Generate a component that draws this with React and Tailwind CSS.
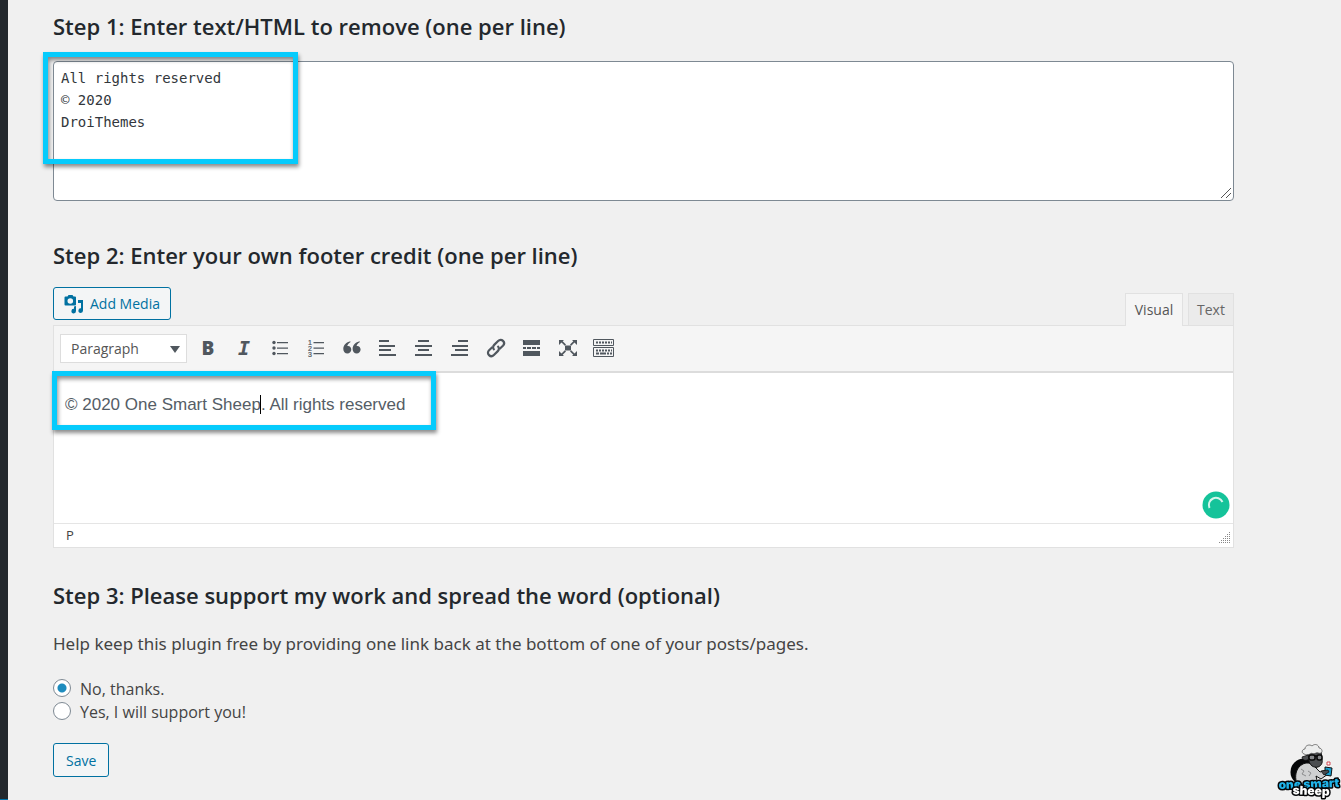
// src/App.jsx
import { useState } from 'react';

const Icon = ({ children }) => (
  <svg viewBox="0 0 20 20" className="w-5 h-5" fill="currentColor" aria-hidden="true">
    {children}
  </svg>
);

const tools = [
  { name: 'Bold', glyph: <span className="text-[19px] leading-5 font-extrabold">B</span> },
  {
    name: 'Italic',
    glyph: <span className="font-['DejaVu_Sans_Mono',monospace] text-[20px] leading-5 font-bold italic">I</span>,
  },
  {
    name: 'Bulleted list',
    glyph: (
      <Icon>
        <circle cx="4" cy="4.500" r="1.700" />
        <circle cx="4" cy="10" r="1.700" />
        <circle cx="4" cy="15.500" r="1.700" />
        <path d="M7 4h11v1.200H7zM7 9.500h11v1.200H7zM7 15h11v1.200H7z" />
      </Icon>
    ),
  },
  {
    name: 'Numbered list',
    glyph: (
      <Icon>
        <g fontSize="7" fontFamily="Liberation Sans, sans-serif" stroke="currentColor" strokeWidth="0.2">
          <text x="2" y="6.500">1</text>
          <text x="2" y="12.500">2</text>
          <text x="2" y="18.500">3</text>
        </g>
        <path d="M7.500 4h10.500v1.200H7.500zM7.500 9.500h10.500v1.200H7.500zM7.500 15h10.500v1.200H7.500z" />
      </Icon>
    ),
  },
  {
    name: 'Blockquote',
    glyph: (
      <Icon>
        <path d="M8.400 3.200v1C6.600 5 5.500 6.500 5.300 8c2.200-.5 4 1.200 4 3.500 0 2.200-1.700 4-3.900 4C3 15.500 1.300 13.700 1.300 11c0-4 3-7 7.100-7.800zM17.700 3.200v1c-1.800.8-2.900 2.300-3.100 3.800 2.200-.5 4 1.200 4 3.500 0 2.200-1.700 4-3.900 4-2.400 0-4.100-1.800-4.100-4.500 0-4 3-7 7.100-7.800z" />
      </Icon>
    ),
  },
  {
    name: 'Align left',
    glyph: <Icon><path d="M1 2h10v2H1zM1 7h16v2H1zM1 11h12v2H1zM1 16h17v2H1z" /></Icon>,
  },
  {
    name: 'Align center',
    glyph: <Icon><path d="M4 2h11v2H4zM1 7h17v2H1zM4 11h11v2H4zM1 16h17v2H1z" /></Icon>,
  },
  {
    name: 'Align right',
    glyph: <Icon><path d="M8 2h10v2H8zM2 7h16v2H2zM5 11h13v2H5zM1 16h17v2H1z" /></Icon>,
  },
  {
    name: 'Insert link',
    glyph: (
      <Icon>
        <g fill="none" stroke="currentColor" strokeWidth="2.200">
          <path d="M8.500 12c-1.800-1.500-1.800-3.600-.3-5.100l3.900-3.900c1.500-1.500 3.500-1.500 4.900-.1s1.400 3.400-.1 4.900L13.500 11" />
          <path d="M11.500 8c1.800 1.500 1.800 3.600.3 5.100L7.900 17c-1.500 1.500-3.500 1.500-4.900.1s-1.400-3.400.1-4.900L6.500 9" />
        </g>
      </Icon>
    ),
  },
  {
    name: 'Read more',
    glyph: <Icon><path d="M1 2h17v5H1zM1 9h3v2H1zM5 9h4v2H5zM10 9h4v2h-4zM15 9h3v2h-3zM1 13h17v5H1z" /></Icon>,
  },
  {
    name: 'Fullscreen',
    glyph: (
      <Icon>
        <path d="M7 7.500h6v5H7z" />
        <path d="M1 2h5L4.700 3.300 8 6.500 6.800 7.700 3.500 4.500 1 7zM19 2h-5l1.300 1.300L12 6.500l1.200 1.200 3.300-3.200L19 7zM1 18h5l-1.300-1.300L8 13.500l-1.200-1.200-3.300 3.200L1 13zM19 18h-5l1.300-1.300-3.300-3.200 1.200-1.200 3.300 3.200L19 13z" />
      </Icon>
    ),
  },
  {
    name: 'Toolbar toggle',
    glyph: (
      <svg viewBox="0 0 22 20" className="w-[22px] h-5" fill="none" stroke="currentColor" aria-hidden="true">
        <path d="M.5 1.500h20v6H.5zM.5 9.500h20v9H.5z" />
        <path strokeWidth="2" strokeDasharray="2 1" d="M3 4.500h16M3 12.500h16" />
        <path strokeWidth="2" d="M3 15.500h3M7 15.500h6M14 15.500h2M17 15.500h2" />
      </svg>
    ),
  },
];

function SheepLogo() {
  return (
    <svg viewBox="0 0 64 58" className="fixed right-0 bottom-0 w-16 h-[58px]" role="img" aria-label="One Smart Sheep">
      <circle cx="27" cy="30" r="13.500" fill="#050608" />
      <path d="M22 25c4-4 8-5 13-3l8 8 6-2 2 4-7 5-5-3 2 9H20c-2-7-2-13 2-18z" fill="#cfd0d1" stroke="#111" />
      <path d="M24 27l3 2-2 3 4 2M31 29l3 2-2 3" fill="none" stroke="#8b8c8e" />
      <path d="M30 10h14l1 7c1 4-1 7-4 8-5 1-8-2-9-6z" fill="#4b4d50" stroke="#111" />
      <path d="M31 13l-6 2c1 4 4 4 7 2z" fill="#4b4d50" stroke="#111" strokeWidth=".8" />
      <path d="M27 12c-3-1-2-5 1-5 0-4 5-5 7-3 3-3 7-1 7 2 3 0 4 4 2 5-2 1-3-1-5 0-3 2-4-1-6 1-2 1-4 1-6 0z" fill="#eceded" stroke="#333" strokeWidth=".6" />
      <rect x="32" y="13" width="6" height="5" rx="2" fill="#85878a" stroke="#080808" strokeWidth="1.500" />
      <rect x="40" y="13" width="5" height="5" rx="2" fill="#85878a" stroke="#080808" strokeWidth="1.500" />
      <path d="M38 14h2" stroke="#080808" strokeWidth="1.500" />
      <path d="M48 25l7 1-1 8-6-1z" fill="#159fd0" stroke="#111" />
      <path d="M44 29l7-1 1 2-5 3z" fill="#4a4c4f" stroke="#111" strokeWidth=".8" />
      <path d="M50 20h3v3h-3z" fill="#fff" stroke="#d24b55" />
      <g
        fontFamily="Inter, sans-serif"
        fontWeight="900"
        stroke="#050608"
        strokeWidth="3"
        strokeLinejoin="round"
        paintOrder="stroke"
        textAnchor="middle"
      >
        <text x="32" y="46" fontSize="12" fill="#1fb4ea" transform="rotate(-2 32 46)">one smart</text>
        <text x="34" y="53" fontSize="12" fill="#fff" transform="rotate(2 34 53)">sheep</text>
      </g>
    </svg>
  );
}

const heading = 'text-[22px] leading-[26px] font-semibold text-[#23282d]';
const highlight = 'absolute pointer-events-none border-[5px] border-[#06cbfc] shadow-[1px_3px_4px_rgba(0,0,0,0.45),inset_1px_3px_4px_rgba(0,0,0,0.45)]';

export default function App() {
  const [remove, setRemove] = useState('All rights reserved\n© 2020\nDroiThemes\n');
  const [support, setSupport] = useState('no');

  const options = [
    { value: 'no', label: 'No, thanks.' },
    { value: 'yes', label: 'Yes, I will support you!' },
  ];

  return (
    <div className="flex min-h-screen bg-[#f0f0f0] font-['Open_Sans','Noto_Sans',sans-serif] text-[#444]">
      {/* Collapsed admin menu */}
      <aside className="w-2 shrink-0 bg-[#23282d] border-b border-[#0073aa]" />

      <main className="flex-1 min-w-0 pt-[13px] pb-[23px] pl-[45px] pr-[107px]">
        <h2 className={heading}><label htmlFor="remove">Step 1: Enter text/HTML to remove (one per line)</label></h2>
        <div className="relative mt-[22px]">
          <textarea
            id="remove"
            value={remove}
            onChange={(e) => setRemove(e.target.value)}
            spellCheck={false}
            className="block w-full h-[140px] px-[7px] py-[5px] resize-none outline-none bg-white border border-[#7e8993] rounded font-['DejaVu_Sans_Mono',monospace] text-[14px] leading-[22px] text-[#32373c]"
          />
          <svg viewBox="0 0 12 12" className="absolute right-0.5 bottom-0.5 w-3 h-3" stroke="#555" fill="none">
            <path d="M1 11L11 1M6 11l5-5" />
          </svg>
          <div className={`${highlight} -left-2.5 -top-[9px] w-[255px] h-28`} />
        </div>

        <h2 className={`${heading} mt-[41px]`}>Step 2: Enter your own footer credit (one per line)</h2>
        <div className="flex justify-between mt-[19px] h-[38px]">
          <button className="flex items-center gap-1.5 h-[33px] px-2.5 border border-[#0071a1] rounded-[3px] bg-[#f3f5f6] text-[#0071a1] text-[14px]">
            <svg viewBox="0 0 20 20" className="w-5 h-5" fill="currentColor" aria-hidden="true">
              <path fillRule="evenodd" d="M1.500 2.500h2L4.500 1h4l1 1.500h1.500q1 0 1 1v7q0 1-1 1H1.500q-1 0-1-1v-7q0-1 1-1zM6.300 4.200a2.800 2.800 0 1 0 0 5.600 2.800 2.800 0 0 0 0-5.600z" />
              <path d="M14 6h5v10.500a2.300 2.300 0 1 1-2-2.200V9h-3z" />
              <path d="M10 12.500l2-.5v5a2.300 2.300 0 1 1-2-2.200z" />
            </svg>
            Add Media
          </button>
          <div className="flex items-end gap-[5px] text-[14px] text-[#555]">
            <button className="relative z-10 -mb-px w-[58px] h-[33px] pb-px bg-[#f5f5f5] border border-b-0 border-[#e1e1e1]">Visual</button>
            <button className="w-[46px] h-8 bg-[#ebebeb] border border-b-0 border-[#e1e1e1] text-[#666]">Text</button>
          </div>
        </div>

        {/* Editor */}
        <div className="relative bg-white border border-[#e1e1e1]">
          <div className="flex items-center h-[47px] pl-1.5 bg-[#f5f5f5] border-b-2 border-[#dcdcdc]">
            <div className="relative mr-[3px]">
              <select
                aria-label="Text style"
                className="block appearance-none w-[127px] h-[29px] pl-2.5 border border-[#ddd] bg-white text-[14px] text-[#555] outline-none"
              >
                <option>Paragraph</option>
                <option>Heading 1</option>
                <option>Heading 2</option>
              </select>
              <svg viewBox="0 0 10 8" className="absolute right-[7px] top-[11px] w-2.5 h-2 pointer-events-none" fill="#50575e">
                <path d="M0 1h10L5 8z" />
              </svg>
            </div>
            {tools.map(({ name, glyph }) => (
              <button key={name} aria-label={name} className="flex items-start justify-center w-9 h-[29px] pt-1 text-[#50575e]">
                {glyph}
              </button>
            ))}
          </div>
          <div
            role="textbox"
            aria-label="Footer credit"
            contentEditable
            suppressContentEditableWarning
            className="h-[150px] px-[11px] pt-5 outline-none font-['Liberation_Sans',Arial,sans-serif] text-[17px] leading-6 text-[#555d66]"
          >
            © 2020 One Smart Sheep<span className="-ml-px border-l border-black" />. All rights reserved
          </div>
          <div className="flex items-center justify-between h-6 pl-3 pr-0.5 border-t border-[#e5e5e5] text-[13px]">
            P
            <svg viewBox="0 0 12 12" className="self-end mb-1 w-3 h-3" fill="#888">
              <path d="M10 1h1v1h-1zM10 3h1v1h-1zM8 3h1v1H8zM10 5h1v1h-1zM8 5h1v1H8zM6 5h1v1H6zM10 7h1v1h-1zM8 7h1v1H8zM6 7h1v1H6zM4 7h1v1H4zM10 9h1v1h-1zM8 9h1v1H8zM6 9h1v1H6zM4 9h1v1H4zM2 9h1v1H2zM10 11h1v1h-1zM8 11h1v1H8zM6 11h1v1H6zM4 11h1v1H4zM2 11h1v1H2zM0 11h1v1H0z" />
            </svg>
          </div>
          <svg viewBox="0 0 28 28" className="absolute right-[3px] bottom-7 w-7 h-7">
            <circle cx="14" cy="14" r="13.500" fill="#15c39a" />
            <path d="M7.500 17a7 7 0 0 1 13-6" fill="none" stroke="#d5f5ec" strokeWidth="2" />
          </svg>
          <div className={`${highlight} -left-0.5 top-[45px] w-96 h-[59px]`} />
        </div>

        <h2 className={`${heading} mt-[34px]`}>Step 3: Please support my work and spread the word (optional)</h2>
        <p className="mt-6 font-['Noto_Sans',sans-serif] text-[17px] leading-6">
          Help keep this plugin free by providing one link back at the bottom of one of your posts/pages.
        </p>

        <div className="mt-[21px]">
          {options.map(({ value, label }) => (
            <label key={value} className="flex items-start gap-[9px] w-fit h-[23px] text-[16px] leading-6">
              <input
                type="radio"
                name="support"
                value={value}
                checked={support === value}
                onChange={() => setSupport(value)}
                className="appearance-none mt-0.5 w-[18px] h-[18px] rounded-full border border-[#7e8993] bg-white checked:bg-[radial-gradient(circle,#1e8cbe_4px,#fff_5px)]"
              />
              {label}
            </label>
          ))}
        </div>

        <button className="block mt-5 h-[34px] px-3 border border-[#0071a1] rounded-[3px] bg-[#f3f5f6] text-[#0071a1] text-[14px]">
          Save
        </button>
      </main>

      <SheepLogo />
    </div>
  );
}
